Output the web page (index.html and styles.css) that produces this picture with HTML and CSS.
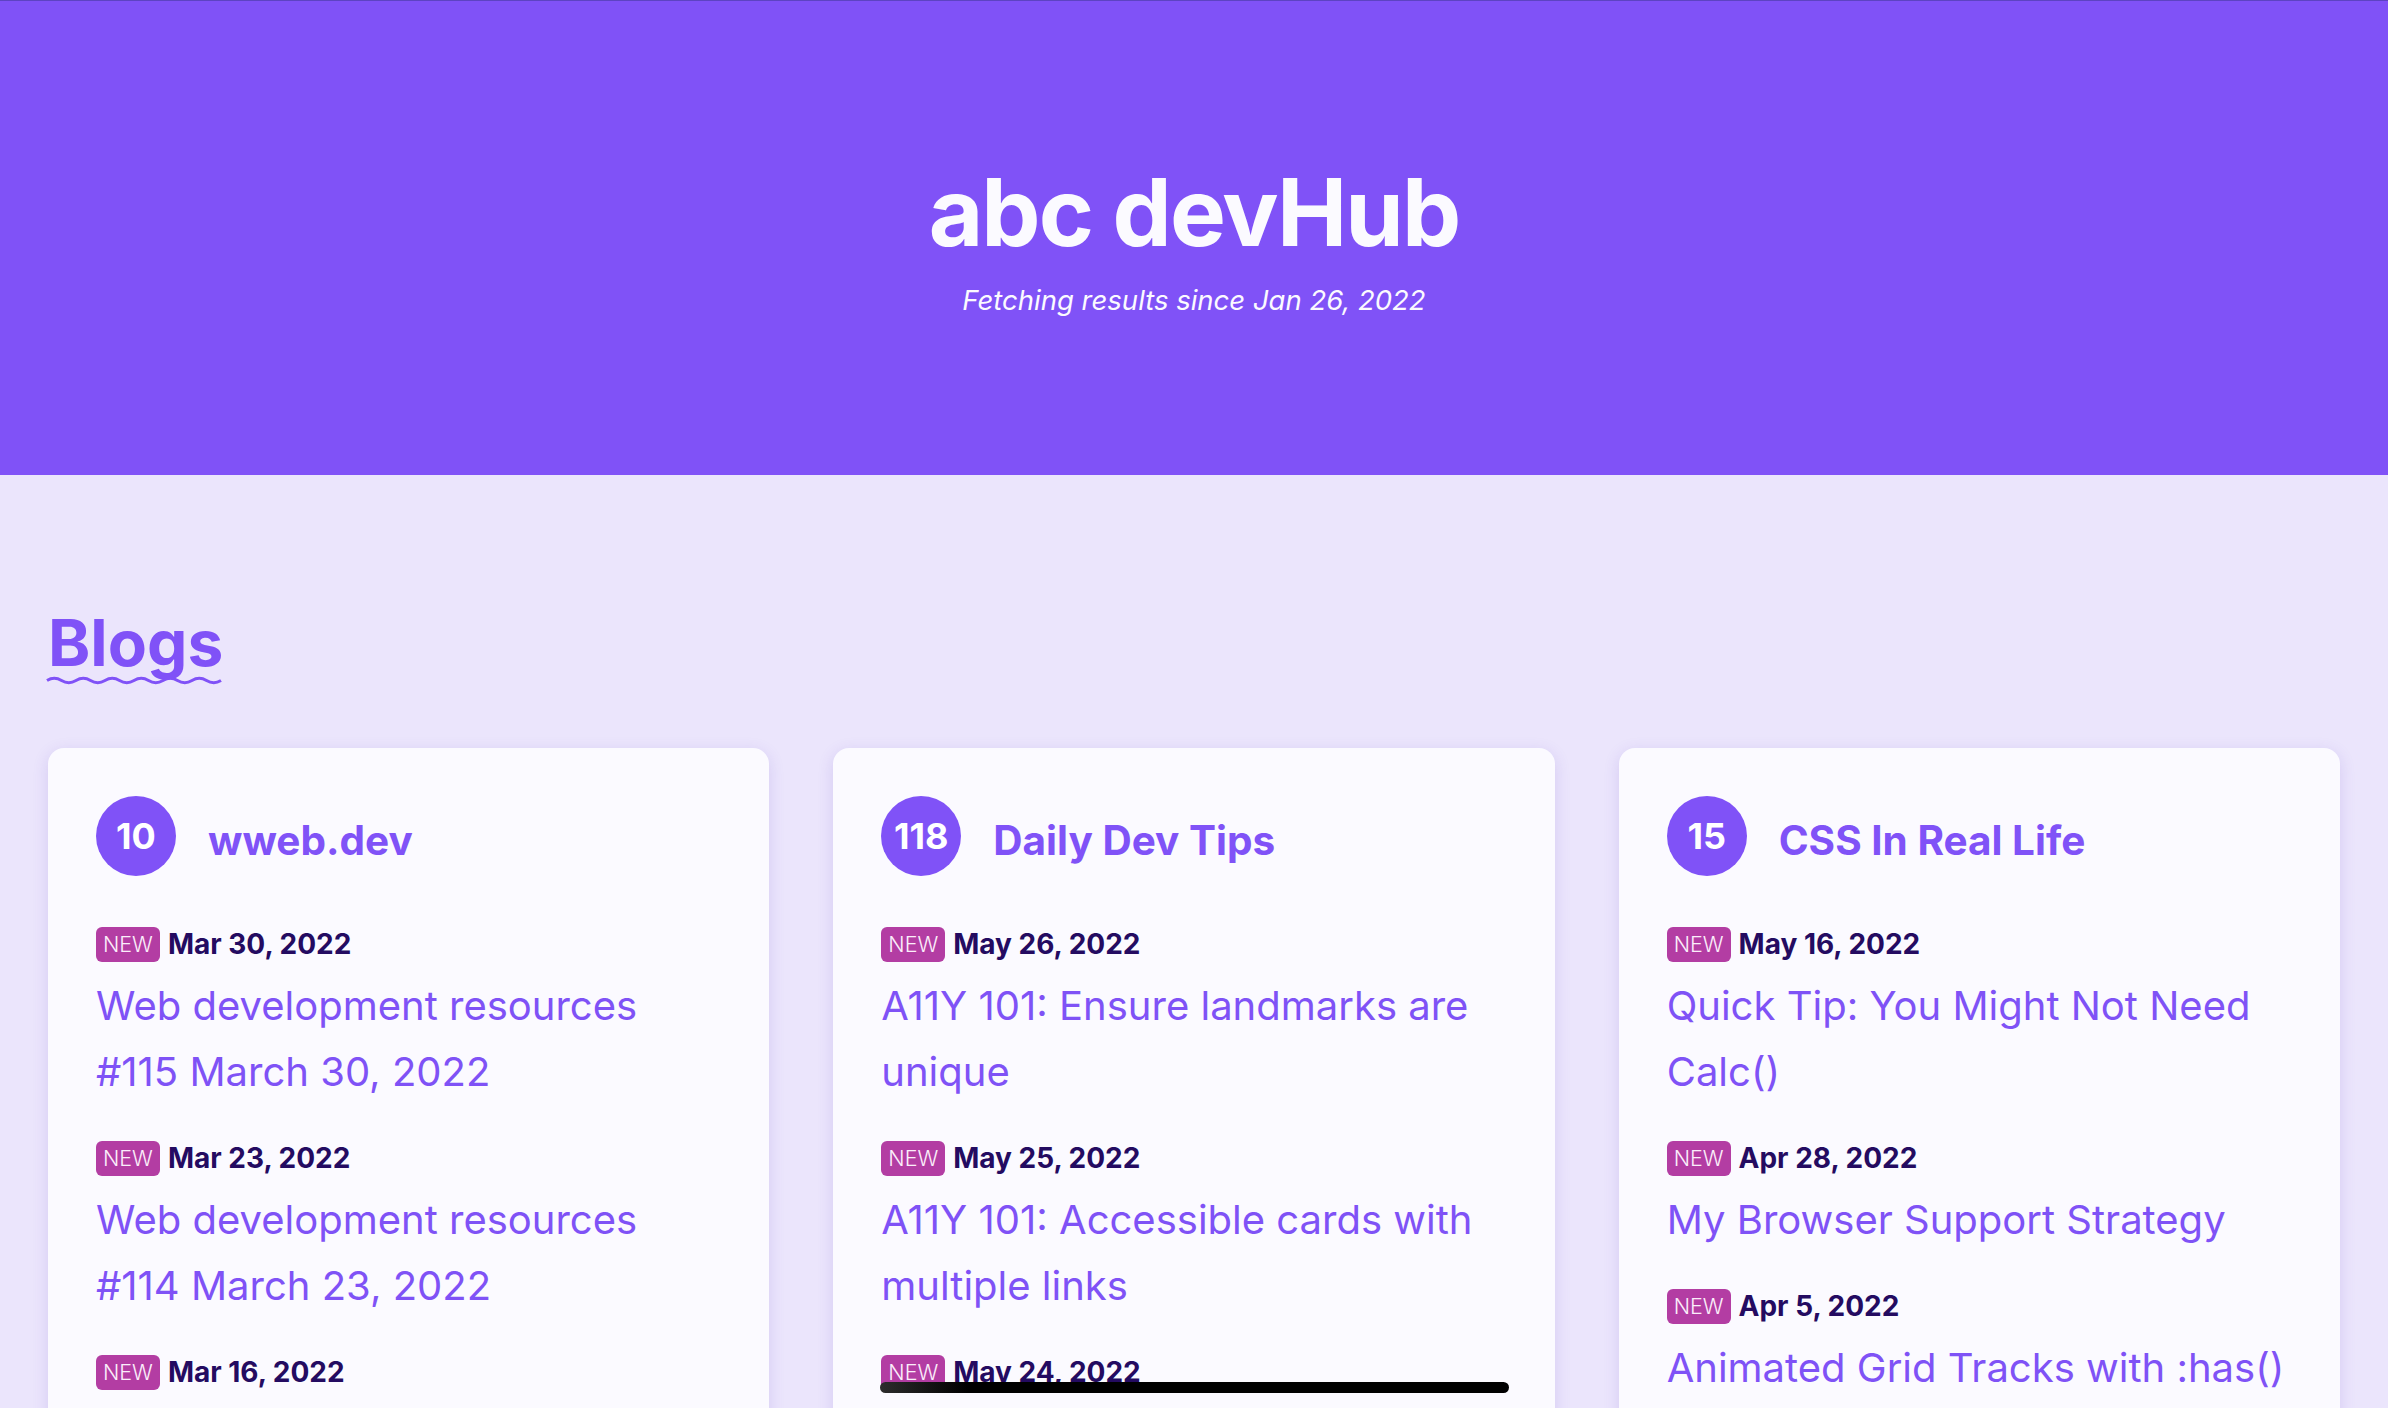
FILE: index.html
```html
<!DOCTYPE html>
<html lang="en">
<head>
<meta charset="utf-8">
<title>abc devHub</title>
<link rel="stylesheet" href="styles.css">
</head>
<body>
<header class="hero">
  <h1 class="hero-title">abc devHub</h1>
  <p class="hero-sub">Fetching results since Jan 26, 2022</p>
</header>
<main class="content">
  <section class="section">
    <h2 class="section-title">
      <span class="section-text">Blogs</span>
      <svg class="wave" width="176" height="9" viewBox="0 0 176 9" aria-hidden="true">
        <path d="M1 4.5 q7.25 -4.5 14.5 0 t14.5 0 t14.5 0 t14.5 0 t14.5 0 t14.5 0 t14.5 0 t14.5 0 t14.5 0 t14.5 0 t14.5 0 t14.5 0" fill="none" stroke="#8052f7" stroke-width="3"/>
      </svg>
    </h2>
    <div class="cards">
      <article class="card">
        <div class="card-head">
          <span class="count">10</span>
          <h3 class="card-title">wweb.dev</h3>
        </div>
        <ul class="posts">
          <li class="post">
            <div class="meta"><span class="new">NEW</span><time class="date">Mar 30, 2022</time></div>
            <a class="post-link" href="#">Web development resources #115 March 30, 2022</a>
          </li>
          <li class="post">
            <div class="meta"><span class="new">NEW</span><time class="date">Mar 23, 2022</time></div>
            <a class="post-link" href="#">Web development resources #114 March 23, 2022</a>
          </li>
          <li class="post">
            <div class="meta"><span class="new">NEW</span><time class="date">Mar 16, 2022</time></div>
            <a class="post-link" href="#">Web development resources #113 March 16, 2022</a>
          </li>
        </ul>
      </article>
      <article class="card">
        <div class="card-head">
          <span class="count">118</span>
          <h3 class="card-title">Daily Dev Tips</h3>
        </div>
        <ul class="posts">
          <li class="post">
            <div class="meta"><span class="new">NEW</span><time class="date">May 26, 2022</time></div>
            <a class="post-link" href="#">A11Y 101: Ensure landmarks are unique</a>
          </li>
          <li class="post">
            <div class="meta"><span class="new">NEW</span><time class="date">May 25, 2022</time></div>
            <a class="post-link" href="#">A11Y 101: Accessible cards with multiple links</a>
          </li>
          <li class="post">
            <div class="meta"><span class="new">NEW</span><time class="date">May 24, 2022</time></div>
            <a class="post-link" href="#">A11Y 101: Accessible tables</a>
          </li>
        </ul>
      </article>
      <article class="card">
        <div class="card-head">
          <span class="count">15</span>
          <h3 class="card-title">CSS In Real Life</h3>
        </div>
        <ul class="posts">
          <li class="post">
            <div class="meta"><span class="new">NEW</span><time class="date">May 16, 2022</time></div>
            <a class="post-link" href="#">Quick Tip: You Might Not Need Calc()</a>
          </li>
          <li class="post">
            <div class="meta"><span class="new">NEW</span><time class="date">Apr 28, 2022</time></div>
            <a class="post-link" href="#">My Browser Support Strategy</a>
          </li>
          <li class="post">
            <div class="meta"><span class="new">NEW</span><time class="date">Apr 5, 2022</time></div>
            <a class="post-link" href="#">Animated Grid Tracks with :has()</a>
          </li>
        </ul>
      </article>
    </div>
  </section>
</main>
<div class="hscroll" aria-hidden="true"></div>
</body>
</html>
```
FILE: styles.css
```css
html {
  overflow: hidden;
}

body {
  margin: 0;
  background: #ebe5fc;
  font-family: Inter, "Noto Sans", "Liberation Sans", sans-serif;
  color: #240b61;
}

.hero {
  background: #8052f7;
  border-top: 1px solid #5d43c2;
  padding: 155px 24px 158px;
  display: flex;
  flex-direction: column;
  align-items: center;
  color: #fbfaff;
}

.hero-title {
  margin: 0;
  font-size: 94px;
  line-height: 1.2;
  font-weight: 700;
  letter-spacing: -0.02em;
}

.hero-sub {
  margin: 15px 0 0;
  font-size: 27.5px;
  line-height: 1.2;
  font-style: italic;
  font-weight: 400;
}

.content {
  padding: 0 48px;
}

.section-title {
  margin: 130px 0 0;
  display: inline-flex;
  flex-direction: column;
  color: #8052f7;
  font-size: 64px;
  line-height: 1.2;
  font-weight: 700;
}

.wave {
  display: block;
  margin-top: -6px;
  margin-left: -2px;
}

.cards {
  margin-top: 63px;
  display: grid;
  grid-template-columns: repeat(3, 1fr);
  gap: 64px;
  align-items: start;
}

.card {
  background: #fbfaff;
  border-radius: 16px;
  box-shadow: 0 4px 16px rgba(92, 62, 190, 0.16);
  padding: 48px;
}

.card-head {
  display: flex;
  align-items: center;
  gap: 32px;
}

.count {
  width: 80px;
  height: 80px;
  border-radius: 50%;
  background: #8052f7;
  color: #ffffff;
  display: flex;
  align-items: center;
  justify-content: center;
  font-size: 36px;
  font-weight: 700;
  flex-shrink: 0;
}

.card-title {
  margin: 0;
  padding-top: 12px;
  font-size: 40.5px;
  line-height: 1.2;
  font-weight: 700;
  color: #8052f7;
}

.posts {
  list-style: none;
  margin: 51px 0 0;
  padding: 0;
  display: flex;
  flex-direction: column;
  gap: 36px;
}

.post {
  display: flex;
  flex-direction: column;
  gap: 11px;
}

.meta {
  display: flex;
  align-items: center;
  gap: 8px;
}

.new {
  height: 35px;
  padding: 0 7px;
  border-radius: 6px;
  background: #b33da3;
  color: #fbeefa;
  font-size: 21.5px;
  font-weight: 300;
  display: flex;
  align-items: center;
}

.date {
  font-size: 28px;
  font-weight: 700;
  color: #240b61;
}

.post-link {
  color: #7f52f6;
  text-decoration: none;
  font-size: 40px;
  line-height: 66px;
  font-weight: 400;
}

.hscroll {
  position: fixed;
  left: 880px;
  top: 1382px;
  width: 629px;
  height: 11px;
  border-radius: 6px;
  background: linear-gradient(90deg, #2c2c2c 0%, #000000 14%, #000000 100%);
}
```
